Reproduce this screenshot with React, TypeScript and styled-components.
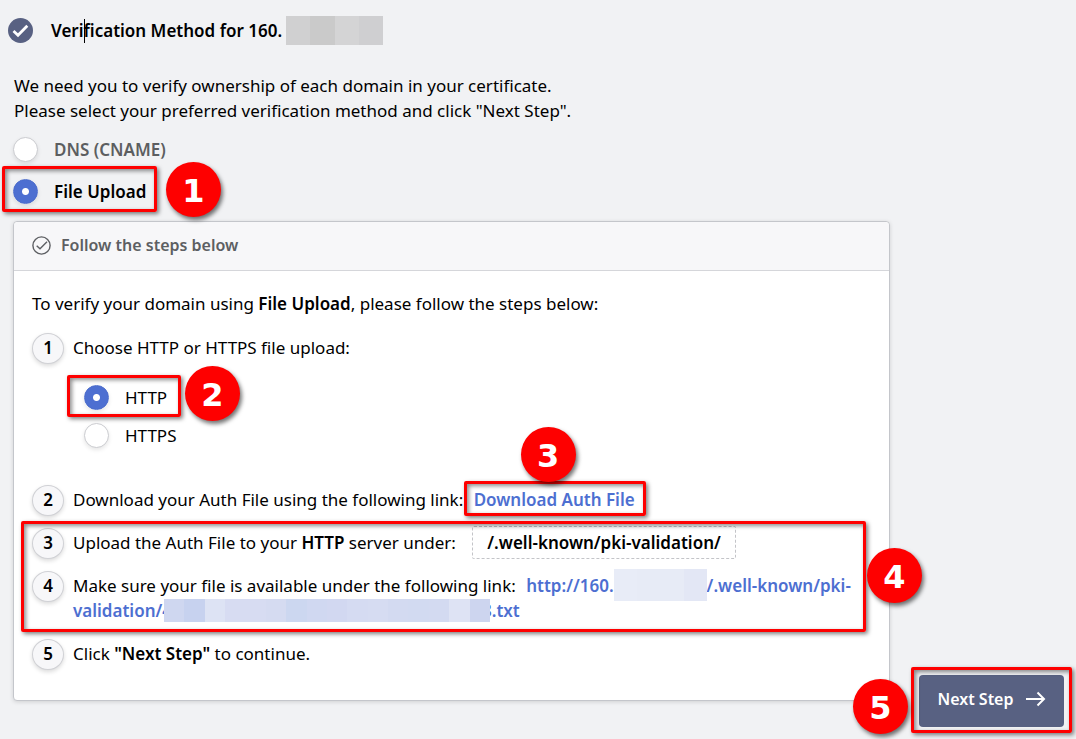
import React, { useState } from "react";
import styled, { createGlobalStyle } from "styled-components";

const GlobalStyle = createGlobalStyle`
  *, *::before, *::after { box-sizing: border-box; }
  body {
    margin: 0;
    background: #f1f2f4;
    color: #000;
    font-family: "Noto Sans", "Open Sans", sans-serif;
    font-size: 17px;
    line-height: 25px;
  }
`;

const Page = styled.main`
  min-height: 100vh;
  padding: 15px 12px 12px 13px;
`;

const TitleBar = styled.header`
  display: flex;
  align-items: center;
  height: 31px;
  margin: 0 0 27px -5px;
`;

const Title = styled.h1`
  display: flex;
  align-items: center;
  gap: 4px;
  margin: 0 0 0 18px;
  font-size: 17px;
  font-weight: 600;
`;

const Caret = styled.span`
  position: relative;
  &::after {
    content: "";
    position: absolute;
    left: 0;
    top: 0;
    width: 1px;
    height: 24px;
    background: #000;
  }
`;

const Redacted = styled.span<{ $width: number; $height: number; $tones: string[]; $over?: number }>`
  position: relative;
  display: inline-block;
  vertical-align: middle;
  width: ${(p) => p.$width}px;
  height: ${(p) => p.$height}px;
  margin: -6px ${(p) => -(p.$over ?? 0)}px -6px ${(p) => -(p.$over ?? 0)}px;
  background: linear-gradient(
    to right,
    ${(p) =>
      p.$tones
        .map((t, i) => `${t} ${(i * 100) / p.$tones.length}% ${((i + 1) * 100) / p.$tones.length}%`)
        .join(", ")}
  );
`;

const Lead = styled.p`
  margin: 0 0 5px 1px;
`;

const Choices = styled.div`
  display: flex;
  flex-direction: column;
  align-items: flex-start;
  margin-bottom: 9px;
`;

const Choice = styled.label<{ $strong?: boolean; $muted?: boolean }>`
  position: relative;
  display: flex;
  align-items: center;
  gap: 16px;
  height: ${(p) => (p.$strong ? 42 : 38)}px;
  font-weight: ${(p) => (p.$strong ? 600 : 400)};
  color: ${(p) => (p.$muted ? "#5c5e60" : "#000")};
`;

const Radio = styled.input`
  appearance: none;
  flex: none;
  width: 25px;
  height: 25px;
  margin: 0;
  border: 1px solid #cbccd0;
  border-radius: 50%;
  background: #fff;
  box-shadow: 0 2px 4px rgba(0, 0, 0, 0.1);
  &:checked {
    border-color: #4a6bcb;
    background: radial-gradient(circle, #fff 0 3px, #4d6fd1 4px);
  }
`;

const Columns = styled.div`
  display: flex;
  align-items: flex-end;
  gap: 29px;
`;

const Card = styled.section`
  flex: 1;
  min-width: 0;
  margin-bottom: 26px;
  border: 1px solid #c4c6cb;
  border-radius: 4px;
  background: #fff;
  box-shadow: 0 1px 4px rgba(0, 0, 0, 0.14);
`;

const CardHead = styled.h2`
  display: flex;
  align-items: center;
  gap: 10px;
  height: 49px;
  margin: 0;
  padding: 0 18px 2px;
  border-bottom: 1px solid #d5d6da;
  border-radius: 4px 4px 0 0;
  background: #f7f7f9;
  color: #5d5f63;
  font-size: 16px;
  font-weight: 600;
`;

const CardBody = styled.div`
  padding: 20px 18px 34px;
`;

const Intro = styled.p`
  margin: 0 0 19px;
`;

const Steps = styled.ol`
  display: flex;
  flex-direction: column;
  gap: 18px;
  margin: 0;
  padding: 0;
  list-style: none;
`;

const Step = styled.li`
  position: relative;
  display: flex;
  gap: 9px;
`;

const StepNumber = styled.span`
  flex: none;
  display: flex;
  align-items: center;
  justify-content: center;
  width: 32px;
  height: 31px;
  margin: -2px 0 -4px;
  padding-bottom: 2px;
  border: 1px solid #d0d1d5;
  border-radius: 50%;
  background: #f7f7f9;
  box-shadow: 0 2px 4px rgba(0, 0, 0, 0.14);
  font-weight: 600;
`;

const StepText = styled.div`
  flex: 1;
  min-width: 0;
`;

const SubChoices = styled.div`
  display: flex;
  flex-direction: column;
  align-items: flex-start;
  margin: 18px 0 15px 11px;
`;

const Strong = styled.strong`
  font-weight: 600;
`;

const Link = styled.a`
  position: relative;
  margin-left: 6px;
  color: #4d6fd1;
  font-weight: 600;
  text-decoration: none;
  & > ${Redacted} {
    margin-top: -8px;
    margin-bottom: -4px;
  }
`;

const PathChip = styled.code`
  display: inline-block;
  height: 33px;
  margin: -4px 0 -4px 12px;
  padding: 3px 14px;
  border: 1px dashed #c3c4c8;
  border-radius: 2px;
  font-family: inherit;
  font-size: 17px;
  font-weight: 600;
`;

const ButtonArea = styled.div`
  position: relative;
  flex: none;
`;

const NextButton = styled.button`
  display: flex;
  align-items: center;
  justify-content: center;
  gap: 12px;
  width: 145px;
  height: 52px;
  padding: 0 0 4px;
  border: 0;
  border-radius: 4px;
  background: #586182;
  color: #fff;
  font-family: inherit;
  font-size: 16px;
  font-weight: 600;
`;

type Edges = { $top: number; $right: number; $bottom: number; $left: number };

const Highlight = styled.span<Edges>`
  position: absolute;
  top: ${(p) => p.$top}px;
  right: ${(p) => p.$right}px;
  bottom: ${(p) => p.$bottom}px;
  left: ${(p) => p.$left}px;
  border: 3px solid #fe0000;
  border-radius: 2px;
  box-shadow: 2px 2px 4px rgba(0, 0, 0, 0.5), inset 2px 2px 4px rgba(0, 0, 0, 0.45);
  pointer-events: none;
`;

const Badge = styled.span<{ $top: number; $left: number }>`
  position: absolute;
  z-index: 1;
  top: ${(p) => p.$top}px;
  left: ${(p) => p.$left}px;
  display: flex;
  align-items: center;
  justify-content: center;
  width: 55px;
  height: 55px;
  padding-top: 3px;
  border-radius: 50%;
  background: #fe0000;
  box-shadow: 2px 3px 4px rgba(0, 0, 0, 0.55);
  color: #fff;
  font: 700 32px/52px "DejaVu Sans", sans-serif;
`;

const greys = ["#d0d0d1", "#cacaca", "#d4d4d5", "#cfcfd1"];
const hostBlues = ["#e8ecf7", "#e7ebf6", "#e7ebf6", "#e3e7f5"];
const fileBlues = [
  "#cfd7f0", "#c7d2ef", "#dde3f4", "#d7dcf2", "#d7dcf2", "#d5dbf1", "#ccd7f0", "#d0d8f1",
  "#d2d8f1", "#d5dbf2", "#d6dcf2", "#d3daf1", "#d2daf1", "#d3daf1", "#dee3f4", "#cdd5ef",
];

export default function App() {
  const [method, setMethod] = useState("file");
  const [protocol, setProtocol] = useState("http");

  return (
    <>
      <GlobalStyle />
      <Page>
        <TitleBar>
          <svg width="25" height="25" viewBox="0 0 25 25" aria-hidden="true">
            <circle cx="12.5" cy="12.5" r="12.5" fill="#586182" />
            <path d="M5.5 13 10 17.2 19.3 7.8" fill="none" stroke="#fff" strokeWidth="2.8" />
          </svg>
          <Title>
            <span>Veri<Caret />fication Method for 160.</span>
            <Redacted $width={97} $height={29} $tones={greys} />
          </Title>
        </TitleBar>

        <Lead>
          We need you to verify ownership of each domain in your certificate.
          <br />
          Please select your preferred verification method and click "Next Step".
        </Lead>

        <Choices>
          <Choice $strong $muted>
            <Radio type="radio" name="method" checked={method === "dns"} onChange={() => setMethod("dns")} />
            DNS (CNAME)
          </Choice>
          <Choice $strong>
            <Radio type="radio" name="method" checked={method === "file"} onChange={() => setMethod("file")} />
            File Upload
            <Highlight $top={-4} $right={-11} $bottom={0} $left={-11} />
            <Badge $top={-8} $left={153}>1</Badge>
          </Choice>
        </Choices>

        <Columns>
          <Card>
            <CardHead>
              <svg width="19" height="19" viewBox="0 0 19 19" fill="none" stroke="#5d5f63" strokeWidth="1.4" aria-hidden="true">
                <circle cx="9.5" cy="9.5" r="8.6" />
                <path d="M4.7 9.7 8 12.8 15 5.8" />
              </svg>
              Follow the steps below
            </CardHead>
            <CardBody>
              <Intro>
                To verify your domain using <Strong>File Upload</Strong>, please follow the steps below:
              </Intro>
              <Steps>
                <Step>
                  <StepNumber>1</StepNumber>
                  <StepText>
                    Choose HTTP or HTTPS file upload:
                    <SubChoices>
                      <Choice>
                        <Radio type="radio" name="protocol" checked={protocol === "http"} onChange={() => setProtocol("http")} />
                        HTTP
                        <Highlight $top={-3} $right={-14} $bottom={-1} $left={-17} />
                        <Badge $top={-12} $left={101}>2</Badge>
                      </Choice>
                      <Choice>
                        <Radio type="radio" name="protocol" checked={protocol === "https"} onChange={() => setProtocol("https")} />
                        HTTPS
                      </Choice>
                    </SubChoices>
                  </StepText>
                </Step>
                <Step>
                  <StepNumber>2</StepNumber>
                  <StepText>
                    Download your Auth File using the following link:{" "}
                    <Link href="#auth-file">
                      Download Auth File
                      <Highlight $top={-7} $right={-11} $bottom={-5} $left={-10} />
                      <Badge $top={-61} $left={47}>3</Badge>
                    </Link>
                  </StepText>
                </Step>
                <Step>
                  <StepNumber>3</StepNumber>
                  <StepText>
                    Upload the Auth File to your <Strong>HTTP</Strong> server under:{" "}
                    <PathChip>/.well-known/pki-validation/</PathChip>
                  </StepText>
                </Step>
                <Step>
                  <StepNumber>4</StepNumber>
                  <StepText>
                    Make sure your file is available under the following link:{" "}
                    <Link href="#validation-file">
                      http://160.
                      <Redacted $width={93} $height={32} $tones={hostBlues} />
                      /.well-known/pki-validation/4
                      <Redacted $width={326} $height={23} $tones={fileBlues} $over={8} />
                      8.txt
                    </Link>
                  </StepText>
                  <Highlight $top={-52} $right={5} $bottom={-9} $left={-11} />
                  <Badge $top={-25} $left={835}>4</Badge>
                </Step>
                <Step>
                  <StepNumber>5</StepNumber>
                  <StepText>
                    Click <Strong>"Next Step"</Strong> to continue.
                  </StepText>
                </Step>
              </Steps>
            </CardBody>
          </Card>
          <ButtonArea>
            <NextButton type="button">
              Next Step
              <svg width="20" height="16" viewBox="0 0 20 16" fill="none" stroke="#fff" strokeWidth="2" aria-hidden="true">
                <path d="M0 8H18M11.5 1.5 18 8 11.5 14.5" />
              </svg>
            </NextButton>
            <Highlight $top={-8} $right={-8} $bottom={-6} $left={-8} />
            <Badge $top={4} $left={-66}>5</Badge>
          </ButtonArea>
        </Columns>
      </Page>
    </>
  );
}
